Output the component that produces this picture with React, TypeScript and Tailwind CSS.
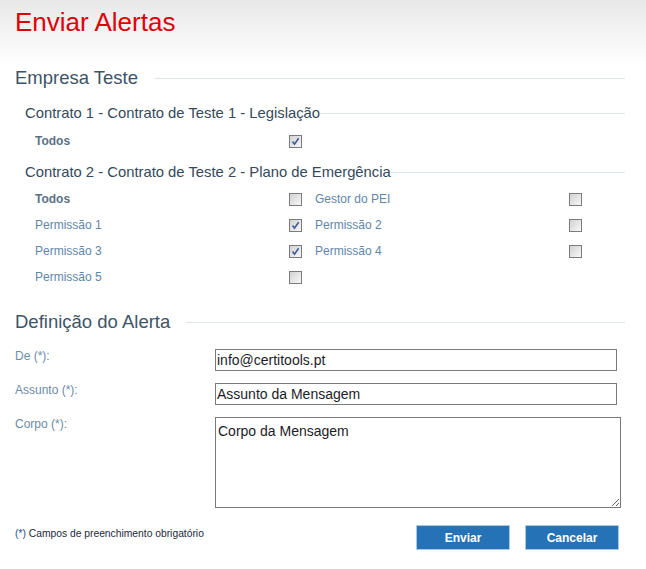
const font = "font-['Liberation_Sans','Arial',sans-serif]";

function Checkbox({ checked }: { checked?: boolean }) {
  return (
    <span className="relative block h-[13px] w-[13px] shrink-0 border border-[#7b7b7b] bg-gradient-to-br from-[#d2d2d2] to-[#f8f8f8]">
      {checked && (
        <svg viewBox="0 0 11 11" className="absolute inset-0 h-[11px] w-[11px]">
          <path d="M2.5 5.5 L4.5 8.2 L8.6 2.3" fill="none" stroke="#3c5c9c" strokeWidth="1.6" />
        </svg>
      )}
    </span>
  );
}

function SectionTitle({ children, className }: { children: string; className?: string }) {
  return (
    <div className={`flex items-center gap-[16px] ${className ?? ""}`}>
      <span className="text-[18.5px] leading-[24px] text-[#3d5468]">{children}</span>
      <span className="h-px flex-1 bg-[#dde7e7]" />
    </div>
  );
}

function ContractTitle({ children }: { children: string }) {
  return (
    <div className="flex h-[20px] items-center pl-[10px]">
      <span className="text-[14.8px] leading-[20px] text-[#34495c]">{children}</span>
      <span className="h-px flex-1 bg-[#dde7e7]" />
    </div>
  );
}

function PermCell({ label, checked, bold }: { label?: string; checked?: boolean; bold?: boolean }) {
  if (label === undefined) return <div className="w-[280px]" />;
  return (
    <div className="flex w-[280px] items-center">
      <span
        className={`w-[254px] text-[12px] ${bold ? "font-bold text-[#5b7184]" : "text-[#6086aa]"}`}
      >
        {label}
      </span>
      <Checkbox checked={checked} />
    </div>
  );
}

const rows: [
  { label: string; checked?: boolean; bold?: boolean },
  { label?: string; checked?: boolean }
][] = [
  [{ label: "Todos", bold: true }, { label: "Gestor do PEI" }],
  [{ label: "Permissão 1", checked: true }, { label: "Permissão 2" }],
  [{ label: "Permissão 3", checked: true }, { label: "Permissão 4" }],
  [{ label: "Permissão 5" }, {}],
];

export default function App() {
  return (
    <div className={`h-[569px] w-[646px] bg-white ${font}`}>
      {/* cabeçalho */}
      <div className="h-[66px] bg-gradient-to-b from-[#e8e8e8] to-white pl-[15px] pt-[5px]">
        <h1 className="text-[26px] leading-[34px] text-[#e0000b]">Enviar Alertas</h1>
      </div>

      <div className="pl-[15px] pr-[21px]">
        <SectionTitle className="h-[24px]">Empresa Teste</SectionTitle>

        <div className="mt-[13px]">
          <ContractTitle>Contrato 1 - Contrato de Teste 1 - Legislação</ContractTitle>
          <div className="flex h-[36px] items-center pl-[20px]">
            <PermCell label="Todos" bold checked />
          </div>
        </div>

        <div className="mt-[3px]">
          <ContractTitle>Contrato 2 - Contrato de Teste 2 - Plano de Emergência</ContractTitle>
          <div className="mt-[4px] pl-[20px]">
            {rows.map(([a, b], i) => (
              <div key={i} className="flex h-[26px] items-center">
                <PermCell label={a.label} checked={a.checked} bold={a.bold} />
                <PermCell label={b.label} checked={b.checked} />
              </div>
            ))}
          </div>
        </div>

        <SectionTitle className="mt-[20px] h-[24px]">Definição do Alerta</SectionTitle>

        {/* formulário */}
        <div className="mt-[15px] flex flex-col gap-[12px] text-[12px] text-[#6b8ca6]">
          <div className="flex">
            <label className="w-[200px] leading-[14px]">De (*):</label>
            <input
              readOnly
              value="info@certitools.pt"
              className="h-[22px] w-[402px] border border-[#7a7a7a] px-[1px] text-[14px] text-[#1c1c28] outline-none"
            />
          </div>
          <div className="flex">
            <label className="w-[200px] leading-[14px]">Assunto (*):</label>
            <input
              readOnly
              value="Assunto da Mensagem"
              className="h-[22px] w-[402px] border border-[#7a7a7a] px-[1px] text-[14px] text-[#1c1c28] outline-none"
            />
          </div>
          <div className="flex">
            <label className="w-[200px] leading-[14px]">Corpo (*):</label>
            <textarea
              readOnly
              value="Corpo da Mensagem"
              className="h-[91px] w-[406px] resize border border-[#7a7a7a] px-[2px] py-[3px] text-[14px] text-[#1c1c28] outline-none"
            />
          </div>
        </div>

        {/* rodapé */}
        <div className="mt-[17px] flex">
          <span className="flex-1 pt-[2px] text-[10.3px] leading-[13px] text-[#1d2a3a]">
            <span className="text-[#1f4f8f]">(*)</span> Campos de preenchimento obrigatório
          </span>
          <div className="flex gap-[15px] pr-[6px]">
            <button className="h-[25px] w-[94px] border border-[#a8cbe8] bg-[#2672b6] text-[12px] font-bold text-white">
              Enviar
            </button>
            <button className="h-[25px] w-[94px] border border-[#a8cbe8] bg-[#2672b6] text-[12px] font-bold text-white">
              Cancelar
            </button>
          </div>
        </div>
      </div>
    </div>
  );
}
